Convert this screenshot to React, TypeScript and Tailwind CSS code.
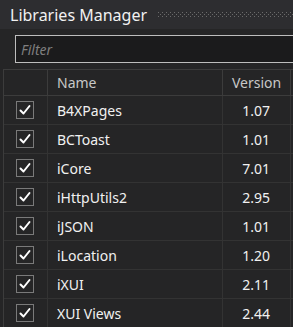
import React from "react";

const libs = [
  ["B4XPages", "1.07"],
  ["BCToast", "1.01"],
  ["iCore", "7.01"],
  ["iHttpUtils2", "2.95"],
  ["iJSON", "1.01"],
  ["iLocation", "1.20"],
  ["iXUI", "2.11"],
  ["XUI Views", "2.44"],
];

function Check() {
  return (
    <div className="w-[18px] h-[18px] border border-[#7a7a7a] flex items-center justify-center">
      <svg width="12" height="12" viewBox="0 0 12 12">
        <path d="M1.5 6.5 L4.5 9.5 L10.5 2" stroke="#ffffff" strokeWidth="2" fill="none" strokeLinecap="round" strokeLinejoin="round" />
      </svg>
    </div>
  );
}

function Grip() {
  return (
    <svg className="flex-1 h-[6px] ml-[11px]" height="6">
      <defs>
        <pattern id="g" width="4" height="4" patternUnits="userSpaceOnUse">
          <rect x="0" y="0" width="1" height="1" fill="#6a6a6a" />
          <rect x="2" y="2" width="1" height="1" fill="#6a6a6a" />
        </pattern>
      </defs>
      <rect x="0" y="0" width="100%" height="6" fill="url(#g)" />
    </svg>
  );
}

export default function App() {
  return (
    <div className="w-[293px] h-[327px] overflow-hidden bg-[#252526] text-[#f1f1f1]" style={{ fontFamily: '"Noto Sans", "Open Sans", sans-serif' }}>
      <div className="h-[29px] bg-[#2d2d30] flex items-center pl-[10px]">
        <span className="text-[16px] leading-none whitespace-nowrap">Libraries Manager</span>
        <Grip />
      </div>
      <div className="pt-[6px] pl-[15px]">
        <div className="h-[28px] w-[300px] border border-[#bdbdbd] bg-[#1b1b1c] flex items-center pl-[5px]">
          <span className="italic text-[14px] text-[#7f7f7f]">Filter</span>
        </div>
      </div>
      <div className="mt-[6px] ml-[3px] border-l border-t border-[#3c3c3c] w-[320px]">
        <div className="flex h-[26px] border-b border-[#3c3c3c] bg-[#252526]">
          <div className="w-[44px] border-r border-[#3c3c3c]" />
          <div className="w-[175px] border-r border-[#3c3c3c] flex items-center pl-[9px] text-[14px] text-[#c8c8c8]">Name</div>
          <div className="w-[68px] border-r border-[#3c3c3c] flex items-center justify-center text-[14px] text-[#c8c8c8]">Version</div>
          <div className="flex-1" />
        </div>
        {libs.map(([n, v]) => (
          <div key={n} className="flex h-[29px] border-b border-[#333333] bg-[#252526]">
            <div className="w-[44px] border-r border-[#333333] flex items-center pl-[12px]">
              <Check />
            </div>
            <div className="w-[175px] border-r border-[#333333] flex items-center pl-[9px] text-[14px]">{n}</div>
            <div className="w-[68px] border-r border-[#333333] flex items-center justify-end pr-[20px] text-[14px]">{v}</div>
            <div className="flex-1" />
          </div>
        ))}
      </div>
    </div>
  );
}
